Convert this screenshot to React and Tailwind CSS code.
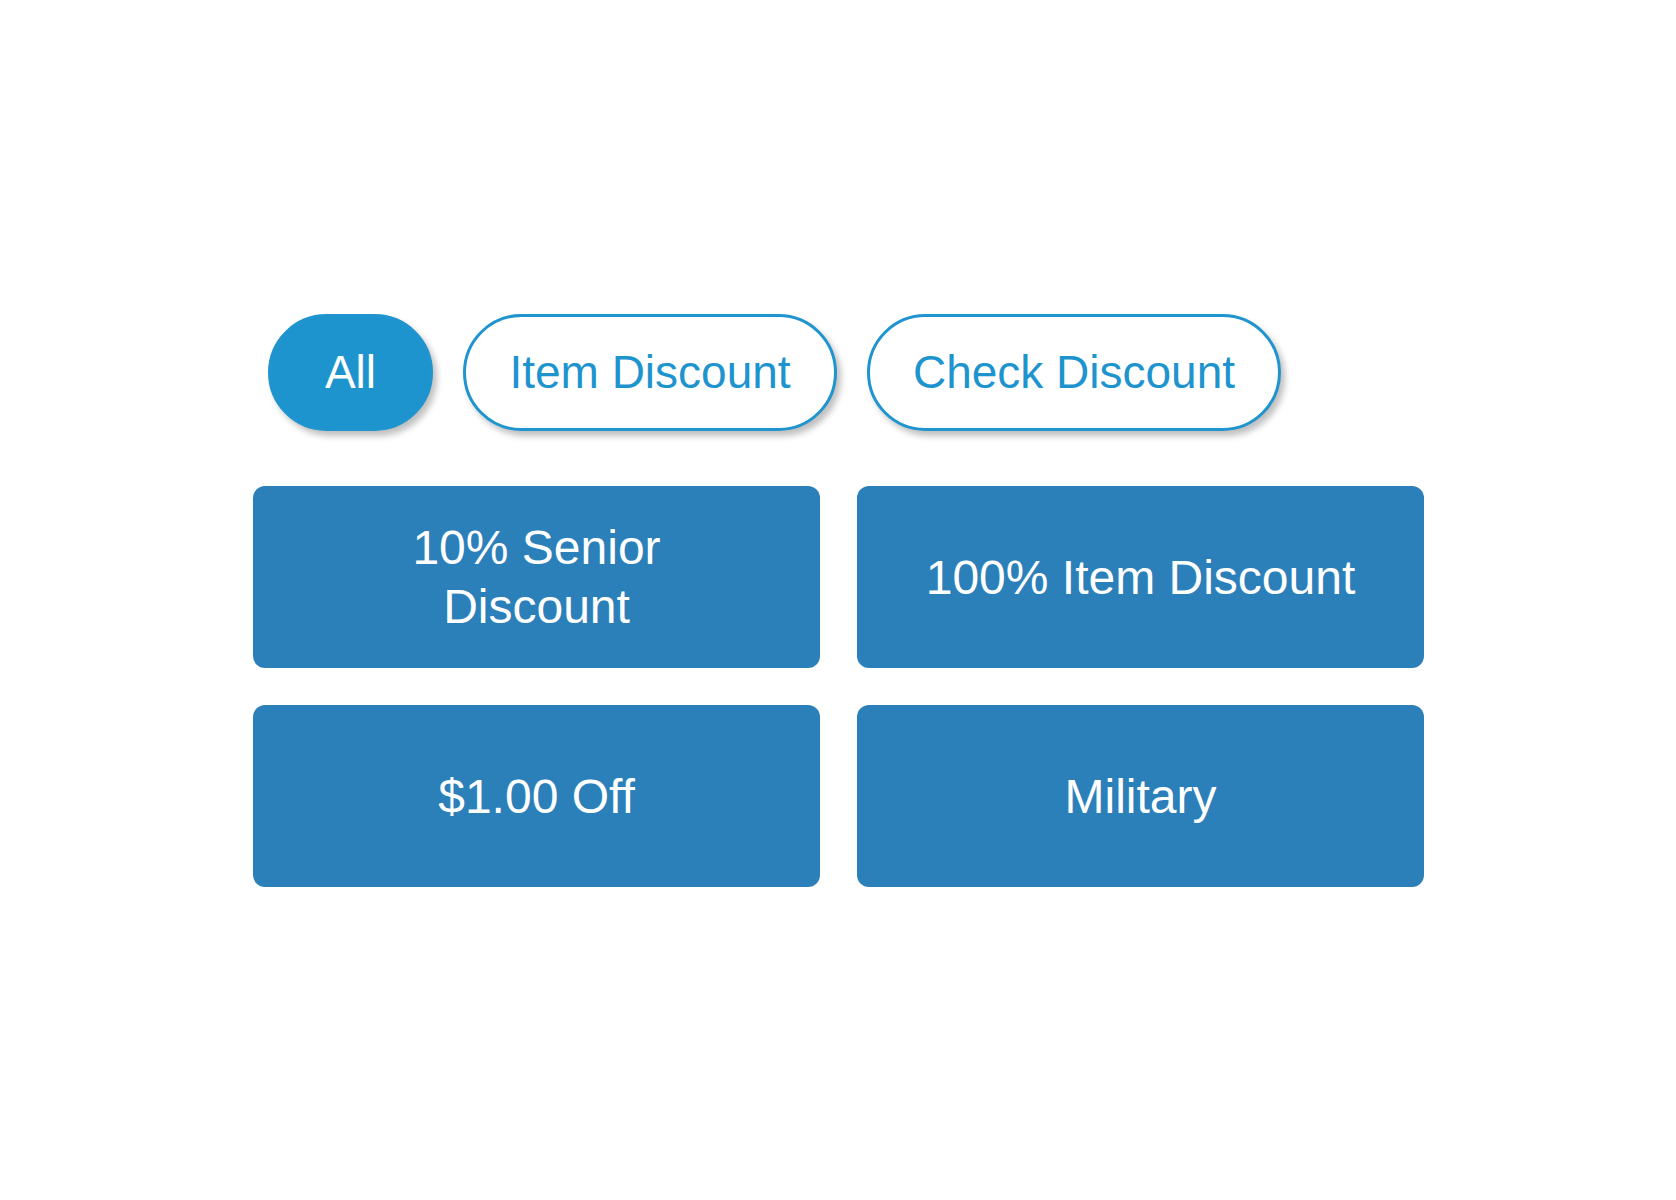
export default function App() {
  const tabs = [
    { label: 'All', active: true, w: 'w-[165px]' },
    { label: 'Item Discount', active: false, w: 'w-[374px]' },
    { label: 'Check Discount', active: false, w: 'w-[414px]' },
  ]
  const discounts = ['10% Senior Discount', '100% Item Discount', '$1.00 Off', 'Military']

  return (
    <div className="min-h-[1200px] w-[1676px] bg-white font-['Liberation_Sans',Arial,sans-serif]">
      <div className="pl-[253px] pt-[314px]">
        <div className="ml-[15px] flex gap-[30px]">
          {tabs.map((tab) => (
            <button
              key={tab.label}
              type="button"
              className={`${tab.w} flex h-[117px] items-center justify-center rounded-full border-[3px] border-[#1f94cf] text-[46px] shadow-[4px_5px_6px_rgba(0,0,0,0.25)] ${
                tab.active ? 'bg-[#1e94cf] text-white' : 'bg-white text-[#1e94cf]'
              }`}
            >
              {tab.label}
            </button>
          ))}
        </div>

        <div className="mt-[55px] grid w-[1171px] grid-cols-2 gap-[37px]">
          {discounts.map((item) => (
            <button
              key={item}
              type="button"
              className="flex h-[182px] items-center justify-center rounded-[12px] bg-[#2b80b9] text-center text-[48px] leading-[59px] text-white"
            >
              <span className="max-w-[440px]">{item}</span>
            </button>
          ))}
        </div>
      </div>
    </div>
  )
}
